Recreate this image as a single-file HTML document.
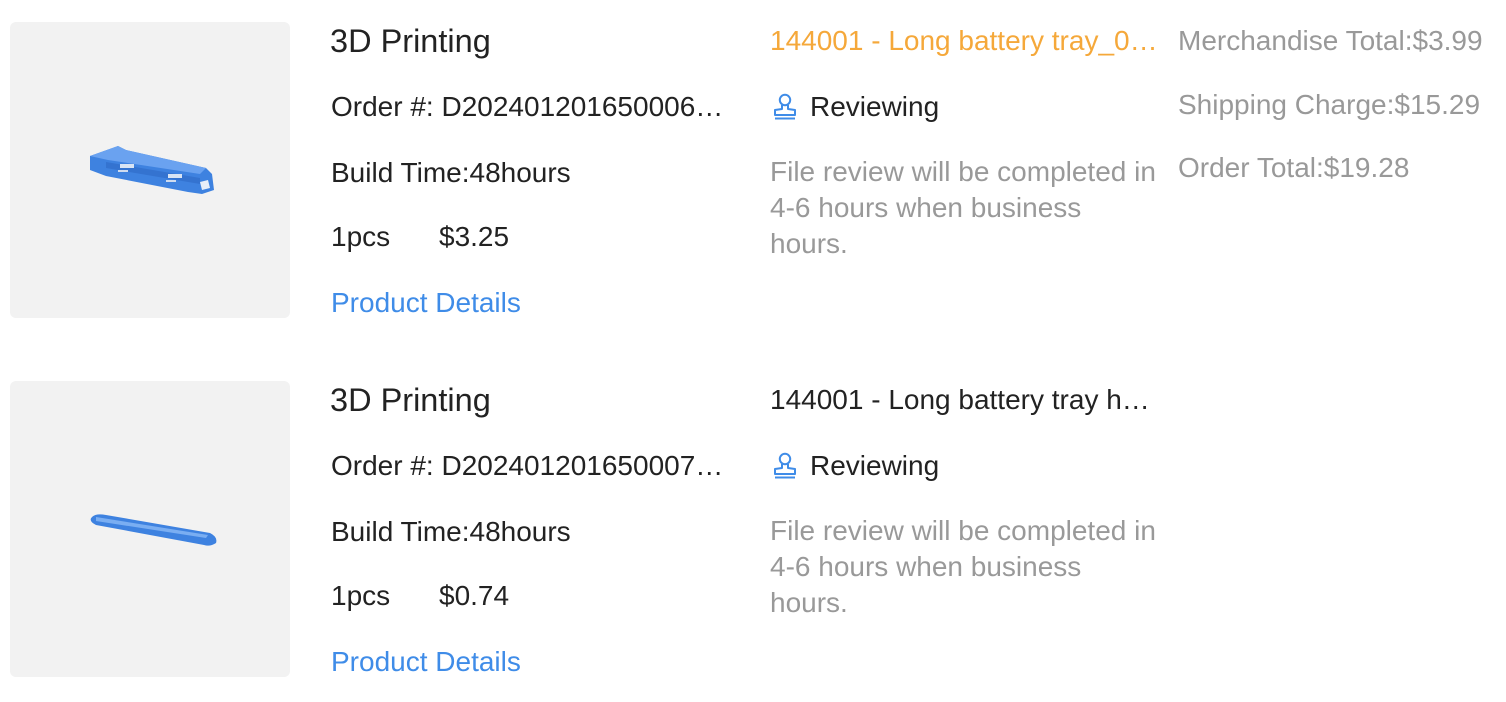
<!DOCTYPE html>
<html><head><meta charset="utf-8"><style>
*{margin:0;padding:0;box-sizing:border-box}
body{width:1506px;height:702px;background:#fff;font-family:"Liberation Sans",Helvetica,Arial,sans-serif;color:#222;position:relative;overflow:hidden}
.row{position:absolute;left:0;width:1506px;height:300px}
.img{position:absolute;left:10px;top:22px;width:280px;height:296px;background:#f2f2f2;border-radius:6px}
.t{position:absolute;white-space:nowrap;font-size:28px;line-height:36px}
.title{font-size:32.5px;left:330px;top:21px;line-height:40px}
.gray{color:#999}
.blue{color:#3f8ce8}
.org{color:#f5a83a}
</style></head><body>

<div class="row" style="top:0">
<div class="img"><svg width="280" height="296" viewBox="0 0 280 296">
<g transform="translate(78,124)">
<path d="M2 10 L30 0 L38 4 L118 22 L124 28 L126 44 L114 48 L100 46 L18 30 L2 24 Z" fill="#3e82e0"/>
<path d="M2 10 L30 0 L38 4 L118 22 L112 28 L20 14 Z" fill="#6aa2f0"/>
<path d="M18 16 L112 32 L112 38 L18 22Z" fill="#3473d0"/>
<rect x="32" y="18" width="14" height="4" fill="#d8e4f4"/>
<rect x="80" y="28" width="14" height="4" fill="#d8e4f4"/>
<rect x="30" y="24" width="10" height="2" fill="#cfdcef"/>
<rect x="78" y="34" width="10" height="2" fill="#cfdcef"/>
<path d="M112 36 L120 34 L122 42 L114 44Z" fill="#e8eef8"/>
</g></svg></div>
<div class="t title">3D Printing</div>
<div class="t" style="left:331px;top:89px">Order #: D202401201650006…</div>
<div class="t" style="left:331px;top:155px">Build Time:48hours</div>
<div class="t" style="left:331px;top:219px">1pcs</div>
<div class="t" style="left:439px;top:219px">$3.25</div>
<div class="t blue" style="left:331px;top:285px">Product Details</div>
<div class="t org" style="left:770px;top:23px">144001 - Long battery tray_0…</div>
<div class="t" style="left:772px;top:89px"><svg width="26" height="28" viewBox="0 0 26 28" style="vertical-align:-5px"><circle cx="13" cy="7" r="5.2" fill="none" stroke="#3f8ce8" stroke-width="2"/><path d="M10 12 L10 16 L3 17 L3 22 L23 22 L23 17 L16 16 L16 12" fill="none" stroke="#3f8ce8" stroke-width="2" stroke-linejoin="round"/><path d="M3 25.5 H23" stroke="#3f8ce8" stroke-width="2"/></svg><span style="margin-left:12px">Reviewing</span></div>
<div class="t gray" style="left:770px;top:154px;white-space:normal;width:420px">File review will be completed in<br>4-6 hours when business<br>hours.</div>
<div class="t gray" style="left:1178px;top:23px">Merchandise Total:$3.99</div>
<div class="t gray" style="left:1178px;top:87px">Shipping Charge:$15.29</div>
<div class="t gray" style="left:1178px;top:150px">Order Total:$19.28</div>
</div>

<div class="row" style="top:359px">
<div class="img"><svg width="280" height="296" viewBox="0 0 280 296">
<path d="M82 136 Q86 132 96 134 L200 152 Q208 156 206 162 Q200 166 194 164 L86 144 Q78 140 82 136Z" fill="#3e82e0"/>
<path d="M86 136 L198 154 L196 157 L86 140Z" fill="#7aaef2"/>
</svg></div>
<div class="t title">3D Printing</div>
<div class="t" style="left:331px;top:89px">Order #: D202401201650007…</div>
<div class="t" style="left:331px;top:155px">Build Time:48hours</div>
<div class="t" style="left:331px;top:219px">1pcs</div>
<div class="t" style="left:439px;top:219px">$0.74</div>
<div class="t blue" style="left:331px;top:285px">Product Details</div>
<div class="t" style="left:770px;top:23px">144001 - Long battery tray h…</div>
<div class="t" style="left:772px;top:89px"><svg width="26" height="28" viewBox="0 0 26 28" style="vertical-align:-5px"><circle cx="13" cy="7" r="5.2" fill="none" stroke="#3f8ce8" stroke-width="2"/><path d="M10 12 L10 16 L3 17 L3 22 L23 22 L23 17 L16 16 L16 12" fill="none" stroke="#3f8ce8" stroke-width="2" stroke-linejoin="round"/><path d="M3 25.5 H23" stroke="#3f8ce8" stroke-width="2"/></svg><span style="margin-left:12px">Reviewing</span></div>
<div class="t gray" style="left:770px;top:154px;white-space:normal;width:420px">File review will be completed in<br>4-6 hours when business<br>hours.</div>
</div>

</body></html>
